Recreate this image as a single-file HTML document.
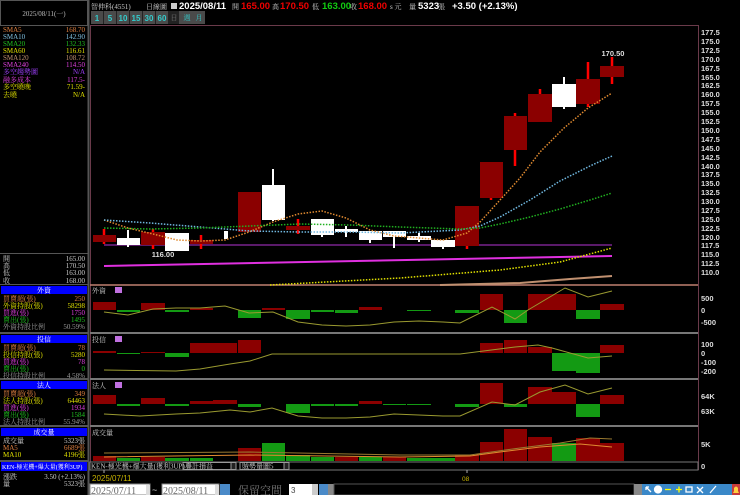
<!DOCTYPE html>
<html><head><meta charset="utf-8"><style>
*{margin:0;padding:0;box-sizing:border-box}
body{width:740px;height:495px;background:#000;overflow:hidden;position:relative}
svg{position:absolute;left:0;top:0}
.s{font-family:"Liberation Serif","Noto Serif CJK SC",serif;font-size:7px}
.b{font-family:"Liberation Sans",sans-serif;font-weight:bold;font-size:9.5px}
.ax{font-family:"Liberation Sans",sans-serif;font-weight:bold;font-size:7.5px;fill:#ddd}
</style></head><body>
<svg width="740" height="495" viewBox="0 0 740 495">
<!-- LEFT PANEL -->
<g fill="none" stroke="#555" stroke-width="1">
<rect x="0.5" y="0.5" width="87" height="25"/>
<line x1="88.5" y1="0" x2="88.5" y2="495" stroke-width="2"/>
<line x1="0" y1="253.5" x2="88" y2="253.5"/>
<line x1="0" y1="284.5" x2="88" y2="284.5"/>
<line x1="0" y1="333" x2="88" y2="333" stroke-width="2"/>
<line x1="0" y1="379" x2="88" y2="379" stroke-width="2"/>
<line x1="0" y1="426" x2="88" y2="426" stroke-width="2"/>
<line x1="0" y1="461" x2="88" y2="461" stroke-width="2"/>
</g>
<text class="s" x="44" y="16" text-anchor="middle" fill="#bbb" font-size="7.5">2025/08/11(一)</text>
<g class="s">
<text x="3" y="32" fill="#e08040">SMA5</text><text x="85" y="32" text-anchor="end" fill="#e08040">168.70</text>
<text x="3" y="39" fill="#80c0e0">SMA10</text><text x="85" y="39" text-anchor="end" fill="#80c0e0">142.90</text>
<text x="3" y="46" fill="#20c020">SMA20</text><text x="85" y="46" text-anchor="end" fill="#20c020">132.33</text>
<text x="3" y="53" fill="#e0e000">SMA60</text><text x="85" y="53" text-anchor="end" fill="#e0e000">116.61</text>
<text x="3" y="60" fill="#c09070">SMA120</text><text x="85" y="60" text-anchor="end" fill="#c09070">108.72</text>
<text x="3" y="67" fill="#e040e0">SMA240</text><text x="85" y="67" text-anchor="end" fill="#e040e0">114.50</text>
<text x="3" y="74" fill="#a040ff">多空趨勢圖</text><text x="85" y="74" text-anchor="end" fill="#a040ff">N/A</text>
<text x="3" y="82" fill="#e040e0">融多成本</text><text x="85" y="82" text-anchor="end" fill="#e040e0">117.5-</text>
<text x="3" y="89" fill="#e0e000">多空曉晚</text><text x="85" y="89" text-anchor="end" fill="#e0e000">71.59-</text>
<text x="3" y="97" fill="#e0e000">去曉</text><text x="85" y="97" text-anchor="end" fill="#e0e000">N/A</text>

<g fill="#ccc">
<text x="3" y="261">開</text><text x="85" y="261" text-anchor="end">165.00</text>
<text x="3" y="268">高</text><text x="85" y="268" text-anchor="end">170.50</text>
<text x="3" y="275">低</text><text x="85" y="275" text-anchor="end">163.00</text>
<text x="3" y="283">收</text><text x="85" y="283" text-anchor="end">168.00</text>
</g>

<rect x="1" y="286" width="86" height="8" fill="#0000ff"/><text x="44" y="292.5" text-anchor="middle" fill="#fff">外資</text>
<text x="3" y="301" fill="#e08040">買賣超(張)</text><text x="85" y="301" text-anchor="end" fill="#e08040">250</text>
<text x="3" y="308" fill="#e0e000">外資持股(張)</text><text x="85" y="308" text-anchor="end" fill="#e0e000">58298</text>
<text x="3" y="315" fill="#e040e0">買進(張)</text><text x="85" y="315" text-anchor="end" fill="#e040e0">1750</text>
<text x="3" y="322" fill="#20c020">賣出(張)</text><text x="85" y="322" text-anchor="end" fill="#20c020">1495</text>
<text x="3" y="329" fill="#999">外資持股比例</text><text x="85" y="329" text-anchor="end" fill="#999">50.59%</text>

<rect x="1" y="335" width="86" height="8" fill="#0000ff"/><text x="44" y="341.5" text-anchor="middle" fill="#fff">投信</text>
<text x="3" y="350" fill="#e08040">買賣超(張)</text><text x="85" y="350" text-anchor="end" fill="#e08040">78</text>
<text x="3" y="357" fill="#e0e000">投信持股(張)</text><text x="85" y="357" text-anchor="end" fill="#e0e000">5280</text>
<text x="3" y="364" fill="#e040e0">買進(張)</text><text x="85" y="364" text-anchor="end" fill="#e040e0">78</text>
<text x="3" y="371" fill="#20c020">賣出(張)</text><text x="85" y="371" text-anchor="end" fill="#20c020">0</text>
<text x="3" y="378" fill="#999">投信持股比例</text><text x="85" y="378" text-anchor="end" fill="#999">4.58%</text>

<rect x="1" y="381" width="86" height="8" fill="#0000ff"/><text x="44" y="387.5" text-anchor="middle" fill="#fff">法人</text>
<text x="3" y="396" fill="#e08040">買賣超(張)</text><text x="85" y="396" text-anchor="end" fill="#e08040">349</text>
<text x="3" y="403" fill="#e0e000">法人持股(張)</text><text x="85" y="403" text-anchor="end" fill="#e0e000">64463</text>
<text x="3" y="410" fill="#e040e0">買進(張)</text><text x="85" y="410" text-anchor="end" fill="#e040e0">1934</text>
<text x="3" y="417" fill="#20c020">賣出(張)</text><text x="85" y="417" text-anchor="end" fill="#20c020">1584</text>
<text x="3" y="424" fill="#999">法人持股比例</text><text x="85" y="424" text-anchor="end" fill="#999">55.94%</text>

<rect x="1" y="428" width="86" height="8" fill="#0000ff"/><text x="44" y="434.5" text-anchor="middle" fill="#fff">成交量</text>
<text x="3" y="443" fill="#ccc">成交量</text><text x="85" y="443" text-anchor="end" fill="#ccc">5323張</text>
<text x="3" y="450" fill="#e08040">MA5</text><text x="85" y="450" text-anchor="end" fill="#e08040">6689張</text>
<text x="3" y="457" fill="#e0e000">MA10</text><text x="85" y="457" text-anchor="end" fill="#e0e000">4196張</text>

<rect x="1" y="462" width="86" height="9" fill="#0000ff"/><text x="2" y="469" fill="#fff" font-size="6">KEN-極光機+爆大量(獲利3UP)</text>
<text x="3" y="479" fill="#ccc">漲跌</text><text x="85" y="479" text-anchor="end" fill="#ccc">3.50 (+2.13%)</text>
<text x="3" y="486" fill="#ccc">量</text><text x="85" y="486" text-anchor="end" fill="#ccc">5323張</text>
</g>

<!-- HEADER -->
<g class="s" fill="#ccc">
<text x="91" y="9">智伸科(4551)</text>
<text x="146" y="9">日線圖</text>
<text x="232" y="9">開</text><text x="272" y="9">高</text><text x="312" y="9">低</text><text x="350" y="9">收</text>
<text x="390" y="9">s 元</text><text x="409" y="9">量</text><text x="438" y="9">張</text>
</g>
<rect x="171" y="3" width="6" height="6" fill="#ccc"/>
<g class="b">
<text x="179" y="9" fill="#fff">2025/08/11</text>
<text x="241" y="9" fill="#e00">165.00</text>
<text x="280" y="9" fill="#e00">170.50</text>
<text x="322" y="9" fill="#1c1">163.00</text>
<text x="358" y="9" fill="#e00">168.00</text>
<text x="418" y="9" fill="#fff">5323</text>
<text x="452" y="9" fill="#fff">+3.50 (+2.13%)</text>
</g>
<!-- period buttons -->
<rect x="91" y="11" width="114" height="13" fill="#4a4a4a"/>
<g fill="#222"><rect x="103" y="11" width="1" height="13"/><rect x="116" y="11" width="1" height="13"/><rect x="129" y="11" width="1" height="13"/><rect x="142" y="11" width="1" height="13"/><rect x="155" y="11" width="1" height="13"/></g>
<rect x="168" y="11" width="11" height="13" fill="#222"/>
<g font-family="Liberation Sans,sans-serif" font-weight="bold" font-size="8" fill="#3cc" text-anchor="middle">
<text x="97" y="21">1</text><text x="110" y="21">5</text><text x="123" y="21">10</text><text x="136" y="21">15</text><text x="149" y="21">30</text><text x="162" y="21">60</text>
</g>
<g class="s" fill="#3cc" text-anchor="middle" font-size="6.5"><text x="174" y="20" fill="#777">日</text><text x="187" y="20">週</text><text x="199" y="20">月</text></g>

<!-- CHART FRAME -->
<rect x="90.5" y="25.5" width="608" height="437" fill="none" stroke="#6a3a4a"/>
<line x1="698.5" y1="25" x2="698.5" y2="470" stroke="#6a3a4a"/>
<line x1="90" y1="285" x2="698" y2="285" stroke="#c08070" stroke-width="1.5"/>
<g stroke="#777" stroke-width="2"><line x1="90" y1="333" x2="698" y2="333"/><line x1="90" y1="379" x2="698" y2="379"/><line x1="90" y1="426" x2="698" y2="426"/></g>

<!-- price axis -->
<g class="ax">
<text x="701" y="35">177.5</text><text x="701" y="44">175.0</text><text x="701" y="53">172.5</text><text x="701" y="62">170.0</text><text x="701" y="71">167.5</text><text x="701" y="80">165.0</text><text x="701" y="88">162.5</text><text x="701" y="97">160.0</text><text x="701" y="106">157.5</text><text x="701" y="115">155.0</text><text x="701" y="124">152.5</text><text x="701" y="133">150.0</text><text x="701" y="142">147.5</text><text x="701" y="151">145.0</text><text x="701" y="160">142.5</text><text x="701" y="169">140.0</text><text x="701" y="177">137.5</text><text x="701" y="186">135.0</text><text x="701" y="195">132.5</text><text x="701" y="204">130.0</text><text x="701" y="213">127.5</text><text x="701" y="222">125.0</text><text x="701" y="231">122.5</text><text x="701" y="240">120.0</text><text x="701" y="248">117.5</text><text x="701" y="257">115.0</text><text x="701" y="266">112.5</text><text x="701" y="275">110.0</text>
<text x="701" y="301">500</text><text x="701" y="313">0</text><text x="701" y="325">-500</text>
<text x="701" y="347">100</text><text x="701" y="356">0</text><text x="701" y="365">-100</text><text x="701" y="374">-200</text>
<text x="701" y="399">64K</text><text x="701" y="414">63K</text>
<text x="701" y="447">5K</text><text x="701" y="469">0</text>
</g>

<!-- long MAs -->
<line x1="104" y1="245" x2="612" y2="245" stroke="#5a1a6a" stroke-width="2"/>
<line x1="104" y1="266" x2="612" y2="256" stroke="#e030e0" stroke-width="2"/>
<polyline points="270,285 400,278 500,270 560,262 612,248" fill="none" stroke="#e0e000" stroke-width="1.5" stroke-dasharray="1.5 1.5"/>
<polyline points="440,285 520,283 570,279 612,276" fill="none" stroke="#c09070" stroke-width="2"/>

<!-- candles -->
<g fill="#8b0000">
<rect x="93" y="235" width="23" height="7"/><rect x="141" y="232" width="24" height="13"/><rect x="190" y="240" width="23" height="4"/>
<rect x="238" y="192" width="23" height="40"/><rect x="286" y="226" width="24" height="4"/><rect x="455" y="206" width="24" height="40"/>
<rect x="480" y="162" width="23" height="36"/><rect x="504" y="116" width="23" height="34"/><rect x="528" y="94" width="24" height="28"/>
<rect x="576" y="79" width="24" height="25"/><rect x="600" y="66" width="24" height="11"/>
</g>
<g stroke="#f00" stroke-width="2.5">
<line x1="104" y1="229" x2="104" y2="235"/><line x1="104" y1="242" x2="104" y2="244"/>
<line x1="153" y1="229" x2="153" y2="232"/><line x1="153" y1="245" x2="153" y2="249"/>
<line x1="201" y1="235" x2="201" y2="240"/><line x1="201" y1="244" x2="201" y2="249"/>
<line x1="298" y1="219" x2="298" y2="226"/><line x1="298" y1="230" x2="298" y2="234"/>
<line x1="467" y1="246" x2="467" y2="249"/><line x1="491" y1="198" x2="491" y2="200"/>
<line x1="515" y1="113" x2="515" y2="116"/><line x1="515" y1="150" x2="515" y2="166"/>
<line x1="540" y1="89" x2="540" y2="94"/>
<line x1="588" y1="62" x2="588" y2="79"/><line x1="588" y1="104" x2="588" y2="107"/>
<line x1="612" y1="57" x2="612" y2="66"/><line x1="612" y1="77" x2="612" y2="84"/>
</g>
<g fill="#fff">
<rect x="117" y="238" width="23" height="7"/><rect x="127" y="230" width="2" height="17"/>
<rect x="165" y="233" width="24" height="18"/>
<rect x="224" y="231" width="4" height="8"/>
<rect x="262" y="185" width="23" height="35"/><rect x="272" y="169" width="2" height="52"/>
<rect x="311" y="219" width="23" height="16"/><rect x="321" y="219" width="2" height="18"/>
<rect x="335" y="229" width="23" height="3"/><rect x="345" y="226" width="2" height="11"/>
<rect x="359" y="231" width="23" height="9"/><rect x="369" y="231" width="2" height="12"/>
<rect x="383" y="231" width="23" height="6"/><rect x="393" y="231" width="2" height="17"/>
<rect x="407" y="236" width="24" height="4"/><rect x="418" y="233" width="2" height="9"/>
<rect x="431" y="240" width="24" height="7"/><rect x="442" y="240" width="2" height="9"/>
<rect x="552" y="84" width="24" height="23"/><rect x="563" y="77" width="2" height="32"/>
</g>

<!-- short MAs (dotted) -->
<g fill="none" stroke-width="1.5" stroke-dasharray="1.5 1.5">
<polyline stroke="#e08a30" points="104,220 128,228 153,234 177,240 201,241 225,240 249,232 273,222 298,214 322,211 346,218 370,230 394,236 419,238 443,240 467,233 480,222 500,200 520,178 540,152 564,128 588,108 612,93"/>
<polyline stroke="#70b8e0" points="104,220 150,223 200,227 250,231 300,232 350,232 400,233 460,230 480,226 500,217 530,200 560,181 590,166 612,156"/>
<polyline stroke="#20b020" points="104,228 150,229 200,228 250,226 300,224 350,225 400,227 460,229 480,228 500,224 530,217 560,209 590,200 612,193"/>
</g>
<text x="163" y="257" class="ax" fill="#eee" text-anchor="middle" font-weight="normal">116.00</text>
<text x="613" y="56" class="ax" fill="#eee" text-anchor="middle" font-weight="normal">170.50</text>

<!-- PANEL 1 外資 -->
<text x="92" y="293" class="s" fill="#ccc">外資</text><rect x="115" y="287" width="7" height="6" fill="#c070e0"/>
<g fill="#8b0000">
<rect x="93" y="302" width="23" height="8"/><rect x="141" y="303" width="24" height="7"/><rect x="190" y="308" width="23" height="2"/><rect x="262" y="308" width="23" height="2"/><rect x="359" y="307" width="23" height="3"/>
<rect x="480" y="294" width="23" height="16"/><rect x="528" y="294" width="48" height="16"/><rect x="600" y="304" width="24" height="6"/>
</g>
<g fill="#139a13">
<rect x="117" y="310" width="23" height="2"/><rect x="165" y="310" width="24" height="2"/><rect x="238" y="310" width="23" height="8"/><rect x="286" y="310" width="24" height="9"/><rect x="311" y="310" width="23" height="2"/><rect x="335" y="310" width="23" height="3"/><rect x="407" y="310" width="24" height="1"/><rect x="455" y="310" width="24" height="3"/>
<rect x="504" y="310" width="23" height="13"/><rect x="576" y="310" width="24" height="9"/>
</g>
<polyline fill="none" stroke="#9a9a30" points="104,312 128,315 153,309 176,308 200,308 225,306 249,313 273,312 298,322 322,325 346,326 370,325 394,322 419,321 443,322 460,323 492,307 515,319 528,310 565,288 588,297 612,291"/>

<!-- PANEL 2 投信 -->
<text x="92" y="342" class="s" fill="#ccc">投信</text><rect x="115" y="336" width="7" height="6" fill="#c070e0"/>
<g fill="#8b0000">
<rect x="93" y="351" width="23" height="2"/><rect x="141" y="352" width="24" height="1"/>
<rect x="190" y="343" width="47" height="10"/><rect x="238" y="340" width="23" height="13"/>
<rect x="480" y="343" width="23" height="10"/><rect x="504" y="340" width="23" height="13"/><rect x="528" y="347" width="24" height="6"/><rect x="600" y="345" width="24" height="8"/>
</g>
<g fill="#139a13">
<rect x="117" y="353" width="23" height="1"/><rect x="165" y="353" width="24" height="4"/>
<rect x="552" y="353" width="24" height="18"/><rect x="576" y="353" width="24" height="20"/>
</g>
<polyline fill="none" stroke="#9a9a30" points="104,370 176,371 200,369 230,364 250,361 272,354 460,354 515,347 538,345 552,348 588,358 612,356"/>

<!-- PANEL 3 法人 -->
<text x="92" y="388" class="s" fill="#ccc">法人</text><rect x="115" y="382" width="7" height="6" fill="#c070e0"/>
<g fill="#8b0000">
<rect x="93" y="395" width="23" height="9"/><rect x="141" y="398" width="24" height="6"/><rect x="190" y="401" width="23" height="3"/><rect x="213" y="400" width="24" height="4"/><rect x="359" y="401" width="23" height="3"/>
<rect x="480" y="383" width="23" height="21"/><rect x="528" y="387" width="24" height="17"/><rect x="552" y="392" width="24" height="12"/><rect x="600" y="395" width="24" height="9"/>
</g>
<g fill="#139a13">
<rect x="117" y="404" width="23" height="2"/><rect x="165" y="404" width="24" height="2"/><rect x="238" y="404" width="23" height="3"/><rect x="286" y="404" width="24" height="9"/><rect x="311" y="404" width="23" height="2"/><rect x="335" y="404" width="23" height="2"/><rect x="383" y="404" width="23" height="1"/><rect x="407" y="404" width="24" height="1"/><rect x="455" y="404" width="24" height="3"/>
<rect x="504" y="404" width="23" height="3"/><rect x="576" y="404" width="24" height="13"/>
</g>
<polyline fill="none" stroke="#9a9a30" points="104,414 140,416 176,414 200,413 230,410 250,412 272,408 298,416 322,418 346,418 370,417 394,414 443,416 460,416 492,402 515,405 540,392 565,385 588,394 612,388"/>

<!-- PANEL 4 成交量 -->
<text x="92" y="435" class="s" fill="#ccc">成交量</text>
<g fill="#8b0000">
<rect x="93" y="456" width="23" height="5"/><rect x="141" y="457" width="24" height="4"/><rect x="238" y="448" width="23" height="13"/><rect x="335" y="457" width="23" height="4"/><rect x="383" y="457" width="23" height="4"/><rect x="455" y="455" width="24" height="6"/>
<rect x="480" y="442" width="23" height="19"/><rect x="504" y="429" width="23" height="32"/><rect x="528" y="437" width="24" height="24"/><rect x="576" y="438" width="24" height="23"/><rect x="600" y="443" width="24" height="18"/>
</g>
<g fill="#139a13">
<rect x="117" y="458" width="23" height="3"/><rect x="165" y="458" width="24" height="3"/><rect x="190" y="458" width="23" height="3"/><rect x="262" y="443" width="23" height="18"/><rect x="286" y="455" width="24" height="6"/><rect x="311" y="457" width="23" height="4"/><rect x="359" y="457" width="23" height="4"/><rect x="407" y="458" width="24" height="3"/><rect x="431" y="458" width="24" height="3"/>
<rect x="552" y="443" width="24" height="18"/>
</g>
<polyline fill="none" stroke="#e08a30" points="104,457 250,455 400,457 470,456 500,452 540,447 580,444 612,447"/>
<polyline fill="none" stroke="#9a7a30" points="104,453 250,452 400,455 470,455 520,448 560,443 590,438 612,439"/>

<!-- bottom dropdown row -->
<rect x="90" y="462" width="608" height="8" fill="#000" stroke="#777" stroke-width="1"/>
<g class="s" fill="#ccc" font-size="6">
<text x="91" y="468.5">KEN-極光機+爆大量(獲利3UP)</text>
<rect x="183" y="462.5" width="48" height="7" fill="none" stroke="#999"/><text x="185" y="468.5">疊計損益</text>
<rect x="231" y="462.5" width="5" height="7" fill="#222" stroke="#999"/>
<rect x="240" y="462.5" width="44" height="7" fill="none" stroke="#999"/><text x="242" y="468.5">賊勢量圖5</text>
<rect x="284" y="462.5" width="5" height="7" fill="#222" stroke="#999"/>
</g>

<!-- date axis -->
<line x1="467" y1="470" x2="467" y2="473" stroke="#aaa"/>
<line x1="104" y1="470" x2="104" y2="473" stroke="#aaa"/>
<text x="92" y="481" font-family="Liberation Sans,sans-serif" font-size="8" fill="#c8b400">2025/07/11</text>
<text x="462" y="481" font-family="Liberation Sans,sans-serif" font-size="6.5" fill="#c8b400">08</text>

<!-- bottom controls -->
<rect x="90" y="484" width="60" height="11" fill="#fff" stroke="#888"/>
<text x="91" y="494" font-family="Liberation Serif,serif" font-size="10" fill="#666">2025/07/11</text>
<rect x="146" y="485" width="4" height="10" fill="#ddd"/>
<text x="152" y="493" font-size="9" fill="#ccc" font-family="Liberation Sans,sans-serif">~</text>
<rect x="162" y="484" width="57" height="11" fill="#fff" stroke="#888"/>
<text x="163" y="494" font-family="Liberation Serif,serif" font-size="10" fill="#666">2025/08/11</text>
<rect x="215" y="485" width="4" height="10" fill="#ddd"/>
<rect x="220" y="484" width="10" height="11" fill="#4a8ac8"/>
<text x="238" y="494" font-family="Liberation Serif,'Noto Serif CJK SC',serif" font-size="11" fill="#777">保留空間</text>
<rect x="289" y="484" width="28" height="11" fill="#fff"/>
<text x="291" y="493" font-size="8" fill="#444" font-family="Liberation Sans,sans-serif">3</text>
<rect x="312" y="484" width="6" height="11" fill="#ccc"/>
<rect x="319" y="484" width="9" height="11" fill="#4a8ac8"/>
<rect x="328" y="484" width="6" height="11" fill="#888"/>
<rect x="334" y="484" width="300" height="11" fill="#000" stroke="#555"/>
<rect x="634" y="484" width="8" height="11" fill="#888"/>
<rect x="642" y="484" width="90" height="11" fill="#3a88c8"/>
<g stroke="#fff" stroke-width="1.3" fill="none">
<path d="M646 487 L651 492 M646 487 H649 M646 487 V490"/>
<circle cx="658" cy="489.5" r="3.5" fill="#fff"/>
<path d="M665 489.5 H671" stroke="#ff0"/>
<path d="M676 489.5 H682 M679 486.5 V492.5" stroke="#ff0"/>
<path d="M686 487 H692 V492 H686 Z"/>
<path d="M697 487 L703 493 M703 487 L697 493"/>
<path d="M710 493 L716 486"/>
</g>
<rect x="732" y="484" width="8" height="11" fill="#c83a3a"/>
<path d="M733 493 H739 L738 491 V488 Q736 485 734 488 V491 Z" fill="#ffd040"/>
</svg>
</body></html>
